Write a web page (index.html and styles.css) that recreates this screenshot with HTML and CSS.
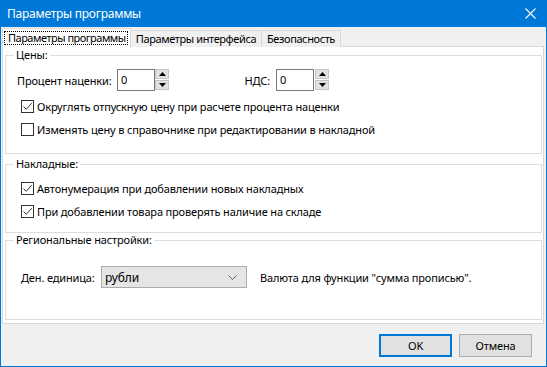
FILE: index.html
```html
<!DOCTYPE html>
<html lang="ru">
<head>
<meta charset="utf-8">
<title>Параметры программы</title>
<link rel="stylesheet" href="styles.css">
</head>
<body>
<div class="window">
  <div class="titlebar">
    <span class="title">Параметры программы</span>
    <svg class="close" width="11" height="11" viewBox="0 0 11 11"><path d="M0.5 0.5L10.5 10.5M10.5 0.5L0.5 10.5" stroke="#fff" stroke-width="1.1" fill="none"/></svg>
  </div>
  <div class="client">
    <div class="tabs">
      <div class="tab active"><span class="focus">Параметры программы</span></div>
      <div class="tab t2">Параметры интерфейса</div>
      <div class="tab t3">Безопасность</div>
    </div>
    <div class="panel">
      <div class="group g1">
        <div class="legend">Цены:</div>
        <div class="row prices">
          <span class="lbl markup">Процент наценки:</span>
          <div class="spin">
            <div class="spin-input">0</div>
            <div class="spin-btns">
              <div class="sb"><svg width="7" height="4" viewBox="0 0 7 4"><path d="M3.5 0L7 4H0z" fill="#000"/></svg></div>
              <div class="sb"><svg width="7" height="4" viewBox="0 0 7 4"><path d="M0 0H7L3.5 4z" fill="#000"/></svg></div>
            </div>
          </div>
          <span class="lbl nds">НДС:</span>
          <div class="spin">
            <div class="spin-input">0</div>
            <div class="spin-btns sep">
              <div class="sb"><svg width="7" height="4" viewBox="0 0 7 4"><path d="M3.5 0L7 4H0z" fill="#000"/></svg></div>
              <div class="sb"><svg width="7" height="4" viewBox="0 0 7 4"><path d="M0 0H7L3.5 4z" fill="#000"/></svg></div>
            </div>
          </div>
        </div>
        <div class="check c1"><span class="box"><svg width="11" height="11" viewBox="0 0 11 11"><path d="M1.5 5.5L4.2 8.3L9.8 2.2" stroke="#333" stroke-width="1" fill="none"/></svg></span>Округлять отпускную цену при расчете процента наценки</div>
        <div class="check c2"><span class="box"></span>Изменять цену в справочнике при редактировании в накладной</div>
      </div>
      <div class="group g2">
        <div class="legend">Накладные:</div>
        <div class="check c3"><span class="box"><svg width="11" height="11" viewBox="0 0 11 11"><path d="M1.5 5.5L4.2 8.3L9.8 2.2" stroke="#333" stroke-width="1" fill="none"/></svg></span>Автонумерация при добавлении новых накладных</div>
        <div class="check c2"><span class="box"><svg width="11" height="11" viewBox="0 0 11 11"><path d="M1.5 5.5L4.2 8.3L9.8 2.2" stroke="#333" stroke-width="1" fill="none"/></svg></span>При добавлении товара проверять наличие на складе</div>
      </div>
      <div class="group g3">
        <div class="legend">Региональные настройки:</div>
        <div class="row currency">
          <span class="lbl cur">Ден. единица:</span>
          <div class="combo"><span>рубли</span><svg width="9" height="5" viewBox="0 0 9 5"><path d="M0.5 0.5L4.5 4.5L8.5 0.5" stroke="#606060" stroke-width="1" fill="none"/></svg></div>
          <span class="hint">Валюта для функции "сумма прописью".</span>
        </div>
      </div>
    </div>
    <div class="buttons">
      <div class="btn default">OK</div>
      <div class="btn">Отмена</div>
    </div>
  </div>
</div>
</body>
</html>
```
FILE: styles.css
```css
* { box-sizing: border-box; }
html, body { margin: 0; padding: 0; }
body {
  width: 547px;
  height: 367px;
  overflow: hidden;
  font-family: "Noto Sans", "Liberation Sans", sans-serif;
  font-size: 11px;
  letter-spacing: -0.15px;
  color: #000;
  background: #f0f0f0;
  white-space: nowrap;
}
.window {
  width: 547px;
  height: 367px;
  display: flex;
  flex-direction: column;
}
.titlebar {
  height: 27px;
  flex: none;
  background: #0078d7;
  color: #fff;
  display: flex;
  align-items: center;
  justify-content: space-between;
  padding: 0 11px 1px 7px;
  font-size: 12px;
  letter-spacing: -0.25px;
}
.close { display: block; }
.client {
  flex: 1;
  border: 1px solid #0078d7;
  border-top: 0;
  background: #f0f0f0;
}
.tabs {
  display: flex;
  align-items: flex-start;
  height: 19px;
  margin: 1px 0 0 1px;
  letter-spacing: -0.4px;
}
.tab {
  height: 17px;
  margin-top: 2px;
  border: 1px solid #d9d9d9;
  border-bottom: 0;
  background: #f0f0f0;
  display: flex;
  align-items: center;
  justify-content: center;
  line-height: 14px;
  padding-bottom: 1px;
}
.tab.t2 { width: 131px; border-left: 0; }
.tab.t3 { width: 79px; border-left: 0; }
.tab.active {
  width: 129px;
  height: 20px;
  margin-top: 0;
  background: #fff;
  position: relative;
  z-index: 1;
  padding: 1px;
  align-items: flex-start;
  justify-content: flex-start;
}
.focus {
  display: block;
  width: 124px;
  height: 14px;
  margin-top: 1px;
  border: 1px dotted #000;
  padding-left: 3px;
  line-height: 12px;
  letter-spacing: -0.5px;
  overflow: hidden;
}
.panel {
  height: 278px;
  margin: -1px 2px 0 1px;
  background: #fff;
  border: 1px solid #d9d9d9;
  display: flow-root;
}
.group {
  border: 1px solid #dcdcdc;
  margin: 0 1px 0 2px;
}
.g1 { margin-top: 8px; height: 99px; }
.g2 { margin-top: 10px; height: 69px; }
.g3 { margin-top: 7px; height: 80px; }
.legend {
  display: block;
  width: fit-content;
  margin: -8px 0 0 8px;
  padding: 0 2px;
  background: #fff;
  line-height: 14px;
  height: 14px;
}
.row {
  display: flex;
  align-items: center;
}
.prices {
  height: 22px;
  margin-top: 7px;
  padding-left: 11px;
}
.lbl.markup { width: 100px; }
.lbl.nds { width: 107px; text-align: right; padding-right: 6px; }
.spin { display: flex; align-items: flex-start; height: 22px; }
.spin-input {
  width: 38px;
  height: 22px;
  border: 1px solid #7a7a7a;
  padding: 3px 0 0 3px;
  line-height: 14px;
  background: #fff;
}
.spin-btns {
  width: 14px;
  height: 21px;
  display: flex;
  flex-direction: column;
  gap: 1px;
}
.spin-btns.sep { margin-left: 1px; }
.sb {
  flex: 1;
  background: #e1e1e1;
  border: 1px solid #c6c6c6;
  display: flex;
  align-items: center;
  justify-content: center;
}
.sb svg { display: block; }
.check {
  display: flex;
  align-items: center;
  height: 13px;
  line-height: 13px;
  padding-left: 15px;
}
.c1 { margin-top: 9px; }
.c2 { margin-top: 10px; }
.c3 { margin-top: 11px; }
.box {
  width: 13px;
  height: 13px;
  flex: none;
  border: 1px solid #333;
  background: #fff;
  margin-right: 3px;
  display: flex;
  align-items: center;
  justify-content: center;
}
.box svg { display: block; }
.currency {
  height: 22px;
  margin-top: 19px;
  padding-left: 15px;
}
.lbl.cur { width: 80px; }
.combo {
  width: 146px;
  height: 22px;
  background: #e5e5e5;
  border: 1px solid #acacac;
  display: flex;
  align-items: center;
  justify-content: space-between;
  padding: 0 9px 0 3px;
  font-size: 12px;
}
.combo svg { display: block; }
.hint { margin-left: 13px; }
.buttons {
  display: flex;
  justify-content: flex-end;
  gap: 7px;
  padding: 10px 14px 0 0;
}
.btn {
  width: 73px;
  height: 23px;
  background: #e1e1e1;
  border: 1px solid #adadad;
  display: flex;
  align-items: center;
  justify-content: center;
  font-size: 11px;
}
.btn.default { border: 2px solid #0078d7; }
```
